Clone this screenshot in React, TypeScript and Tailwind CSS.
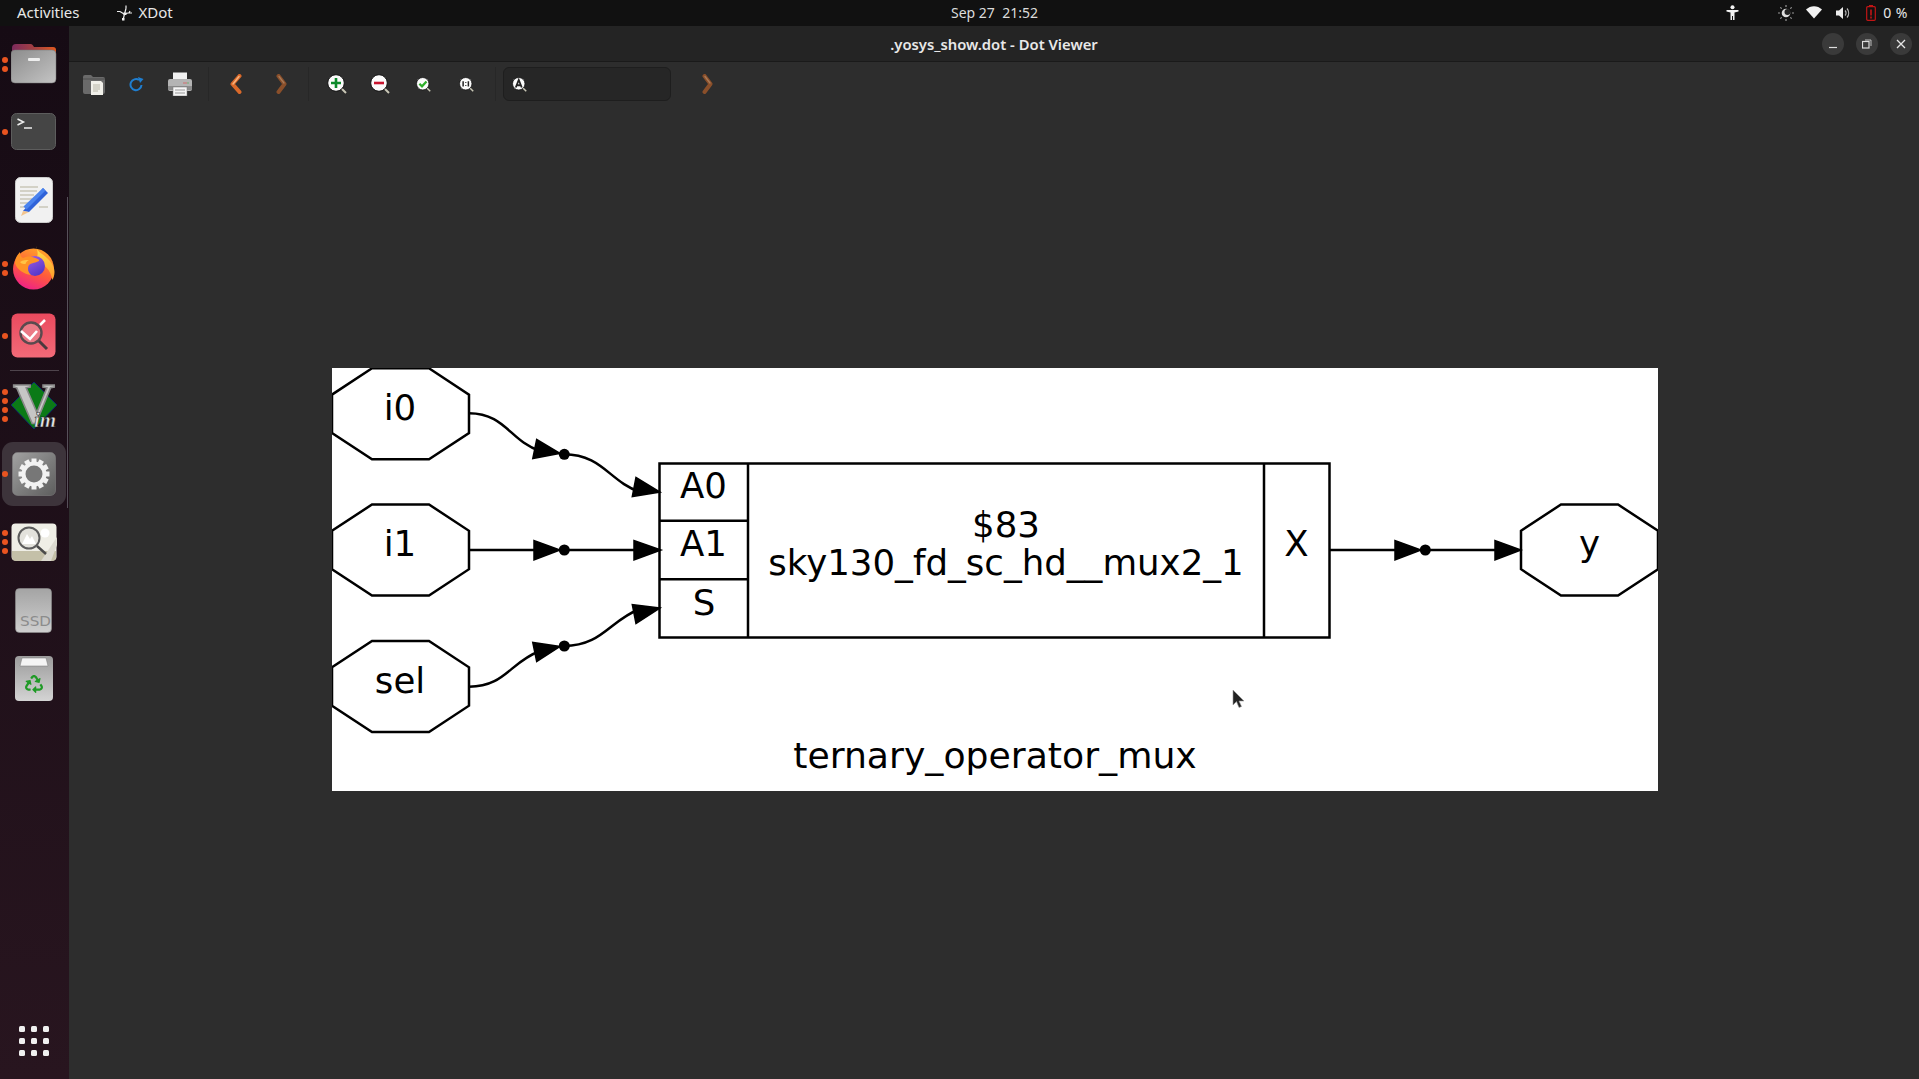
import React from "react";
import { FaRecycle } from "react-icons/fa";

const DJ = "'DejaVu Sans', sans-serif";

function Dots({ n }: { n: number }) {
  return (
    <div className="absolute left-[2px] top-0 bottom-0 flex flex-col justify-center gap-[3px]">
      {Array.from({ length: n }).map((_, i) => (
        <span key={i} className="block w-[6px] h-[6px] rounded-full bg-[#e95420]" />
      ))}
    </div>
  );
}

function DockItem({ n, active, tall, children }: { n: number; active?: boolean; tall?: boolean; children: React.ReactNode }) {
  return (
    <div className={tall ? "relative w-[68px] h-[69px] flex items-center justify-center" : "relative w-[68px] h-[68px] flex items-center justify-center"}>
      {active && <div className="absolute left-[2px] top-[2px] w-[64px] h-[64px] rounded-[11px] bg-[#3d343b]" />}
      <Dots n={n} />
      <div className="relative flex">{children}</div>
    </div>
  );
}

const FolderIcon = () => (
  <svg width="46" height="40" viewBox="0 2 46 40">
    <defs>
      <linearGradient id="ft" x1="0" x2="1" y1="0" y2="0">
        <stop offset="0" stopColor="#7c2a5c" />
        <stop offset="0.55" stopColor="#a8423f" />
        <stop offset="1" stopColor="#e2591f" />
      </linearGradient>
      <linearGradient id="fb" x1="0" x2="1" y1="0" y2="1">
        <stop offset="0" stopColor="#8c8c8c" />
        <stop offset="1" stopColor="#c4c4c4" />
      </linearGradient>
    </defs>
    <path d="M1 6a4 4 0 0 1 4-4h14a3 3 0 0 1 3 1.5l1 1.5h19a3 3 0 0 1 3 3v10H1z" fill="url(#ft)" />
    <rect x="0" y="8" width="45" height="33" rx="4" fill="url(#fb)" stroke="#777" strokeWidth="0.5" />
    <rect x="17" y="16" width="12" height="3" rx="1" fill="#eee" />
  </svg>
);

const TerminalIcon = () => (
  <svg width="46" height="38" viewBox="0 0 46 38">
    <rect x="0.5" y="0.5" width="44" height="36" rx="5" fill="#454545" stroke="#5d5d5d" />
    <path d="M6.5 6l6 3-6 3" fill="none" stroke="#eee" strokeWidth="1.5" />
    <path d="M13 15h8" stroke="#eee" strokeWidth="1.5" />
  </svg>
);

const EditorIcon = () => (
  <svg width="38" height="46" viewBox="0 0 38 46">
    <rect x="0.5" y="0.5" width="37" height="45" rx="5" fill="#f1f1f1" stroke="#ccc" />
    <path d="M5 10h18M5 14h17M5 18h14M5 22h12M5 26h9M5 30h7M24 30h9" stroke="#c9c6b8" strokeWidth="1.6" />
    <path d="M28 11l5 5-19 19-6-1z" fill="#2f62d9" />
    <path d="M28 11l2.5 2.5-19 19-3-3z" fill="#4a83ee" />
    <path d="M8 34l6 1-8 4z" fill="#f3c48d" />
  </svg>
);

const FirefoxIcon = () => (
  <svg width="44" height="44" viewBox="0 0 44 44">
    <defs>
      <linearGradient id="ff" x1="0.7" x2="0.3" y1="0.1" y2="1">
        <stop offset="0" stopColor="#ff9a2b" />
        <stop offset="0.5" stopColor="#ff5a3c" />
        <stop offset="1" stopColor="#ee1f8a" />
      </linearGradient>
      <linearGradient id="fy" x1="0.5" x2="0.6" y1="0" y2="1">
        <stop offset="0" stopColor="#ffe14a" />
        <stop offset="1" stopColor="#ff9a2b" />
      </linearGradient>
      <linearGradient id="fp" x1="0.2" x2="0.8" y1="0" y2="1">
        <stop offset="0" stopColor="#a25ce0" />
        <stop offset="1" stopColor="#4a34c8" />
      </linearGradient>
    </defs>
    <circle cx="21.500" cy="23" r="20.500" fill="url(#ff)" />
    <path d="M24 0c1 6 6 7 11 12 5 5 7.500 9 7.500 14 0 3-1 6-2 8-2-10-8-17-19-19 5-2 5-9 2.500-15z" fill="url(#fy)" />
    <circle cx="23" cy="20" r="10" fill="url(#fp)" />
    <path d="M3 17c0-4 2-8 5-11 0 3 1 5 3 6 2-1 6-2 9-1 3 1 8 2 7 4-4 2-8 2-10 4-2 3-1 7 2 10-7-1-14-5-16-12z" fill="#ff9326" />
    <path d="M8 16c3-2 6-2 9-2-2 1-3 2-3.500 4-2 0-4 0-5.500-2z" fill="#ffc445" />
  </svg>
);

const RedIcon = () => (
  <svg width="46" height="46" viewBox="0 0 46 46">
    <defs>
      <linearGradient id="rd" x1="0" x2="0" y1="0" y2="1">
        <stop offset="0" stopColor="#e94a5e" />
        <stop offset="1" stopColor="#f26a78" />
      </linearGradient>
    </defs>
    <rect x="0.5" y="0.5" width="44" height="44" rx="6" fill="url(#rd)" />
    <circle cx="20" cy="20" r="10.5" fill="#eb7a86" stroke="#5a4a4e" strokeWidth="2.4" />
    <path d="M10 18l9 8 7-8M29 12l5-5" fill="none" stroke="#fff" strokeWidth="2.6" />
    <path d="M28 28l8 8" stroke="#4a3a3e" strokeWidth="3" />
  </svg>
);

const VimIcon = () => (
  <svg className="overflow-visible" width="46" height="48" viewBox="0 0 46 48">
    <path d="M23 0L46 23 23 47 0 23z" fill="#0b7a17" stroke="#0a2a6a" strokeWidth="1" />
    <text x="2" y="41" fontFamily="'Liberation Serif', serif" fontWeight="700" fontSize="58" fill="#c6c6c6" stroke="#8a8a8a" strokeWidth="1.600">V</text>
    <text x="23" y="45" fontFamily="'Liberation Serif', serif" fontStyle="italic" fontWeight="700" fontSize="21" fill="#e4e4e4" stroke="#111" strokeWidth="0.5">im</text>
  </svg>
);

const SettingsIcon = () => {
  const teeth = Array.from({ length: 12 }).map((_, i) => i * 30);
  return (
    <svg width="44" height="44" viewBox="0 0 44 44">
      <defs>
        <linearGradient id="st" x1="0" x2="1" y1="0" y2="1">
          <stop offset="0" stopColor="#a2a2a2" />
          <stop offset="1" stopColor="#5d5d5d" />
        </linearGradient>
      </defs>
      <rect x="0.5" y="0.5" width="43" height="43" rx="5" fill="url(#st)" stroke="#888" strokeWidth="0.5" />
      {teeth.map((a) => (
        <rect key={a} x="19.5" y="6.5" width="5" height="6" fill="#f2f2f2" transform={`rotate(${a} 22 22)`} />
      ))}
      <circle cx="22" cy="22" r="10.5" fill="#777" stroke="#f2f2f2" strokeWidth="4" />
    </svg>
  );
};

const LensIcon = () => (
  <svg width="46" height="38" viewBox="0 0 46 38">
    <rect x="0.5" y="0.5" width="45" height="37" rx="4" fill="#efeee6" />
    <path d="M1 28h44v6a4 4 0 0 1-4 4H5a4 4 0 0 1-4-4z" fill="#c4c0a8" />
    <path d="M30 38L46 14v8L40 38z" fill="#dcdad0" />
    <circle cx="34" cy="10" r="4.5" fill="#fff" />
    <circle cx="18" cy="15" r="10.5" fill="#e3e2dc" stroke="#5c5c5c" strokeWidth="2" />
    <path d="M11 21l5-10 3 5 2-3 4 8z" fill="#fff" />
    <path d="M26 23l9 8" stroke="#4a4a4a" strokeWidth="2.4" />
  </svg>
);

const SsdIcon = () => (
  <svg width="38" height="45" viewBox="0 0 38 45">
    <defs>
      <linearGradient id="sd" x1="0" x2="0" y1="0" y2="1">
        <stop offset="0" stopColor="#a4a4a4" />
        <stop offset="1" stopColor="#cfcfcf" />
      </linearGradient>
    </defs>
    <rect x="0.5" y="0.5" width="36" height="44" rx="4" fill="url(#sd)" stroke="#8f8f8f" strokeWidth="0.6" />
    <text x="5" y="38" fontFamily={DJ} fontSize="14" fill="#8c8c8c" textLength="31" lengthAdjust="spacingAndGlyphs">SSD</text>
  </svg>
);

const TrashIcon = () => (
  <div className="relative w-[38px] h-[45px] rounded-[4px] bg-gradient-to-b from-[#9c9c9c] to-[#d4d4d4] flex items-end justify-center pb-[8px]">
    <svg className="absolute left-[4px] top-[1px]" width="30" height="10" viewBox="0 0 30 10">
      <path d="M3 1h24l2 8H1z" fill="#f4f4f4" stroke="#777" strokeWidth="0.5" />
    </svg>
    <FaRecycle className="text-[#1f9a26] text-[18px]" />
  </div>
);

function Dock() {
  return (
    <div className="relative w-[69px] shrink-0 flex flex-col pt-[4px] bg-gradient-to-b from-[#160b14] to-[#28151f]">
      <div className="absolute right-[1px] top-[171px] h-[311px] w-px bg-[#57505a]" />
      <DockItem n={2}><FolderIcon /></DockItem>
      <DockItem n={1}><TerminalIcon /></DockItem>
      <DockItem n={0}><EditorIcon /></DockItem>
      <DockItem n={2}><FirefoxIcon /></DockItem>
      <DockItem n={1}><RedIcon /></DockItem>
      <div className="h-px mx-[10px] bg-[#4e444c]" />
      <DockItem n={4} tall><VimIcon /></DockItem>
      <DockItem n={1} active><SettingsIcon /></DockItem>
      <DockItem n={3}><LensIcon /></DockItem>
      <DockItem n={0}><SsdIcon /></DockItem>
      <DockItem n={0}><TrashIcon /></DockItem>
      <div className="mt-auto mb-[23px] ml-[19px] grid grid-cols-3 gap-x-[6px] gap-y-[6px] w-[30px]">
        {Array.from({ length: 9 }).map((_, i) => (
          <span key={i} className="block w-[6px] h-[6px] rounded-[1.5px] bg-[#f0f0f0]" />
        ))}
      </div>
    </div>
  );
}

function TopBar() {
  return (
    <div className="relative h-[26px] shrink-0 bg-[#111111] flex items-center pb-[1px] text-[15px] text-[#e8e8e8]" style={{ fontFamily: "'Noto Sans', sans-serif" }}>
      <span className="ml-[17px]">Activities</span>
      <svg className="ml-[37px]" width="16" height="16" viewBox="0 0 16 16" fill="none" stroke="#eee" strokeWidth="1.2">
        <path d="M0 6.5h3M3 6.5l4 2.5M9 0.5v3M9 3.5L7.5 9M7.5 9L6 15M7 9l4-1h4M12 8l1-2" />
        <rect x="5" y="13" width="2.5" height="2.5" fill="#eee" stroke="none" />
        <rect x="6.5" y="7.5" width="3" height="2.5" fill="#eee" stroke="none" />
      </svg>
      <span className="ml-[6px]">XDot</span>
      <span className="absolute left-[951px] top-[2px] text-[14px] text-[#dcdcdc] whitespace-pre">Sep 27  21:52</span>
      <div className="ml-auto flex items-center">
        <svg width="13" height="16" viewBox="0 0 13 16" fill="#f2f2f2">
          <circle cx="6.5" cy="2.2" r="2" />
          <path d="M0.5 5h12v1.4l-4 1V15H7V11H6v4H4.500V7.400l-4-1z" />
        </svg>
        <svg className="ml-[39px]" width="16" height="16" viewBox="0 0 16 16" fill="none">
          <circle cx="8" cy="8" r="4.300" fill="#ddd" />
          <circle cx="9.500" cy="7" r="3" fill="#222" />
          <path d="M8 0v2M8 14v2M0 8h2M14 8h2M2.300 2.300l1.400 1.400M12.300 12.300l1.400 1.400M2.300 13.700l1.400-1.400M12.300 3.700l1.400-1.400" stroke="#999" strokeWidth="1.2" />
        </svg>
        <svg className="ml-[12px]" width="16" height="13" viewBox="0 0 16 13">
          <path d="M0 3.500C4.500-1 11.500-1 16 3.500L8 12.500z" fill="#f2f2f2" />
        </svg>
        <svg className="ml-[14px]" width="15" height="14" viewBox="0 0 15 14" fill="none">
          <path d="M0 4.500h3L7 1v12L3 9.500H0z" fill="#ececec" />
          <path d="M9 4.500a3.500 3.500 0 0 1 0 5M11 2.500a7 7 0 0 1 0 9" stroke="#bbb" strokeWidth="1.200" />
        </svg>
        <svg className="ml-[15px]" width="10" height="16" viewBox="0 0 10 16" fill="none">
          <rect x="0.700" y="1.700" width="8.600" height="13.600" rx="1" stroke="#c01515" strokeWidth="1.200" />
          <rect x="3" y="0" width="4" height="1.500" fill="#c01515" />
          <path d="M5 4.500v6M5 11.500v2" stroke="#c01515" strokeWidth="1.600" />
        </svg>
        <span className="ml-[7px] mr-[11px] text-[14px] tracking-[0.5px]">0 %</span>
      </div>
    </div>
  );
}

function WinBtn({ children }: { children: React.ReactNode }) {
  return <div className="w-[22px] h-[22px] rounded-full bg-[#3a3a3a] flex items-center justify-center">{children}</div>;
}

function TitleBar() {
  return (
    <div className="relative h-[36px] shrink-0 bg-[#242424] border-b border-[#1a1a1a] flex items-center justify-center pt-[1px]" style={{ fontFamily: "'Noto Sans', sans-serif" }}>
      <span className="text-[14.800px] font-semibold text-[#e8e8e8]">.yosys_show.dot - Dot Viewer</span>
      <div className="absolute right-[7px] top-[7px] flex gap-[12px]">
        <WinBtn>
          <svg width="10" height="10" viewBox="0 0 10 10"><path d="M1 8.500h8" stroke="#ddd" strokeWidth="1.200" /></svg>
        </WinBtn>
        <WinBtn>
          <svg width="10" height="10" viewBox="0 0 10 10" fill="none" stroke="#ddd"><rect x="0.500" y="2.500" width="6.500" height="6.500" strokeWidth="1.200" /><path d="M3 1h6v6" strokeWidth="0.800" /></svg>
        </WinBtn>
        <WinBtn>
          <svg width="10" height="10" viewBox="0 0 10 10"><path d="M1 1l8 8M9 1l-8 8" stroke="#e6e6e6" strokeWidth="1.300" /></svg>
        </WinBtn>
      </div>
    </div>
  );
}

function Sep({ ml }: { ml: string }) {
  return <div className={`${ml} w-px h-[34px] bg-[#272727]`} />;
}

function Magnifier({ size, children }: { size: number; children?: React.ReactNode }) {
  return (
    <svg width={size} height={size} viewBox="0 0 20 20">
      <path d="M13 13l6 6" stroke="#c9c7b6" strokeWidth="2" />
      <circle cx="9" cy="9" r="8.300" fill="#fbfbfb" stroke="#111" strokeWidth="1" />
      {children}
    </svg>
  );
}

const ArrowL = ({ c1, c2 }: { c1: string; c2: string }) => (
  <svg width="12" height="20" viewBox="0 0 12 20">
    <path d="M9.500 2L2.500 10l7 8" fill="none" stroke={c2} strokeWidth="4" strokeLinecap="round" strokeLinejoin="round" />
    <path d="M9 2.500L3 10" fill="none" stroke={c1} strokeWidth="1.500" strokeLinecap="round" />
  </svg>
);

const ArrowR = () => (
  <svg width="11" height="20" viewBox="0 0 11 20">
    <path d="M2.500 2l6 8-6 8" fill="none" stroke="#8a4f2a" strokeWidth="4" strokeLinecap="round" strokeLinejoin="round" />
    <path d="M3 2.500L8 9" fill="none" stroke="#a97a58" strokeWidth="1.300" strokeLinecap="round" />
  </svg>
);

function Toolbar() {
  return (
    <div className="h-[44px] shrink-0 flex items-center bg-[#2d2d2d]">
      <svg className="ml-[14px]" width="22" height="21" viewBox="0 0 22 21">
        <path d="M0 3a2 2 0 0 1 2-2h6l2 2h10a2 2 0 0 1 2 2v13a2 2 0 0 1-2 2H2a2 2 0 0 1-2-2z" fill="#6a6a6a" />
        <path d="M0 5h22" stroke="#4e4e4e" strokeWidth="1" />
        <path d="M8 7h10l2 2v12H8z" fill="#f1f0ea" />
        <path d="M10 11h7M10 13h7M10 15h7M10 17h5" stroke="#b8b6a8" strokeWidth="1" />
      </svg>
      <svg className="ml-[24px]" width="15" height="15" viewBox="0 0 15 15" fill="none">
        <path d="M12.500 8a5.500 5.500 0 1 1-2.500-5" stroke="#1f7ed0" strokeWidth="2" />
        <path d="M9 0l5.500 2-3.500 4z" fill="#1f7ed0" />
      </svg>
      <svg className="ml-[24px]" width="24" height="24" viewBox="0 0 24 24">
        <rect x="5" y="0.500" width="14" height="8" fill="#f2f2f2" />
        <rect x="0" y="7" width="24" height="12" rx="2" fill="#b4b4b4" />
        <rect x="0" y="14" width="24" height="4" fill="#8c8c8c" />
        <circle cx="16" cy="11" r="0.700" fill="#d55" /><circle cx="18" cy="11" r="0.700" fill="#d55" /><circle cx="20" cy="11" r="0.700" fill="#5a5" />
        <rect x="5" y="15" width="14" height="9" fill="#f5f5f5" stroke="#777" strokeWidth="0.500" />
        <path d="M7 18h10M7 21h10" stroke="#999" />
      </svg>
      <Sep ml="ml-[16px]" />
      <div className="ml-[21px] flex"><ArrowL c1="#f6b27c" c2="#d9692a" /></div>
      <div className="ml-[34px] flex"><ArrowR /></div>
      <Sep ml="ml-[21px]" />
      <div className="ml-[18px] flex">
        <Magnifier size={20}><path d="M4 9h10M9 4v10" stroke="#0d8a2b" strokeWidth="2.600" /></Magnifier>
      </div>
      <div className="ml-[23px] flex">
        <Magnifier size={20}><path d="M4 9h10" stroke="#c8152f" strokeWidth="2.600" /></Magnifier>
      </div>
      <div className="ml-[26px] flex">
        <Magnifier size={15}><path d="M4.500 9l3.500 3.500 6-6.500" fill="none" stroke="#2fae2a" strokeWidth="3" /></Magnifier>
      </div>
      <div className="ml-[28px] flex">
        <Magnifier size={15}><path d="M5.500 5.500v7M12.500 5.500v7M9 6.500v1M9 10.500v1" stroke="#222" strokeWidth="2" /></Magnifier>
      </div>
      <Sep ml="ml-[21px]" />
      <div className="ml-[7px] w-[168px] h-[34px] rounded-[6px] bg-[#262626] border border-[#1e1e1e] flex items-center pl-[8px]">
        <Magnifier size={15}><path d="M5 14L9 4l4 10M6.500 11h5" fill="none" stroke="#222" strokeWidth="2.400" /></Magnifier>
      </div>
      <div className="ml-[31px] flex"><ArrowR /></div>
    </div>
  );
}

const octagon = (y0: number) => {
  const ys = [y0 + 26.3, y0, y0, y0 + 26.3, y0 + 64.7, y0 + 91, y0 + 91, y0 + 64.7];
  const xs = [332, 372, 429, 469, 469, 429, 372, 332];
  return xs.map((x, i) => `${x},${ys[i]}`).join(" ");
};

function Arrow({ p }: { p: string }) {
  return <polygon points={p} fill="#000" stroke="#000" strokeWidth="1.500" />;
}

function Graph() {
  const text = { fontFamily: DJ, fontSize: 35.6, fill: "#000", textAnchor: "middle" as const };
  return (
    <svg className="block" width="1326" height="423" viewBox="332 368 1326 423">
      <g fill="none" stroke="#000" strokeWidth="2.500">
        <polygon points={octagon(368.3)} />
        <polygon points={octagon(504.5)} />
        <polygon points={octagon(641)} />
        <polygon points="1521,530.800 1561,504.500 1618,504.500 1658,530.800 1658,569.200 1618,595.500 1561,595.500 1521,569.200" />
        <rect x="659.500" y="463.500" width="670" height="174" />
        <path d="M659.500 520.700H748M659.500 579.300H748M748 463.500V637.500M1264 463.500V637.500" />
        <path d="M469 413.300C505 413.300 510 441 540 451" />
        <path d="M564 454.300C602 454.300 610 482 640 492" />
        <path d="M469 550H535M564 550H635" />
        <path d="M469 686.700C505 686.700 510 662 540 651" />
        <path d="M564 646C602 646 610 620 640 609" />
        <path d="M1330 550H1396M1425 550H1496" />
      </g>
      <Arrow p="536.700,439.500 532.800,458.500 560,453.300" />
      <Arrow p="636,477.500 632.300,496.500 660,492" />
      <Arrow p="534,540.500 534,560 560,550" />
      <Arrow p="634,540.500 634,560 661,550" />
      <Arrow p="532.800,642.500 536.700,661.500 560,646.500" />
      <Arrow p="632.300,604.500 636,623.500 660,608" />
      <Arrow p="1395,540.500 1395,560 1421,550" />
      <Arrow p="1495,540.500 1495,560 1521,550" />
      <circle cx="564.300" cy="454.300" r="5.500" />
      <circle cx="564.300" cy="550" r="5.500" />
      <circle cx="564.300" cy="646" r="5.500" />
      <circle cx="1425.300" cy="550" r="5.500" />
      <text {...text} x="400" y="420">i0</text>
      <text {...text} x="400" y="555.500">i1</text>
      <text {...text} x="400" y="692.500">sel</text>
      <text {...text} x="703.500" y="497.500">A0</text>
      <text {...text} x="703.500" y="555.500">A1</text>
      <text {...text} x="704" y="615">S</text>
      <text {...text} x="1006" y="537">$83</text>
      <text {...text} x="1006" y="575">sky130_fd_sc_hd__mux2_1</text>
      <text {...text} x="1296.500" y="556">X</text>
      <text {...text} x="1589.500" y="556">y</text>
      <text {...text} x="995" y="768" fontSize="36.200">ternary_operator_mux</text>
      <path d="M1233 690v15l3.500-3.500 2.500 6 2.500-1-2.500-5.500h5z" fill="#222" stroke="#999" strokeWidth="0.600" />
    </svg>
  );
}

export default function App() {
  return (
    <div className="w-[1919px] h-[1079px] overflow-hidden flex flex-col bg-[#2d2d2d]">
      <TopBar />
      <div className="flex-1 flex min-h-0">
        <Dock />
        <div className="flex-1 flex flex-col min-w-0">
          <TitleBar />
          <Toolbar />
          <div className="flex-1 pt-[262px] pl-[263px]">
            <div className="w-[1326px] h-[423px] bg-white">
              <Graph />
            </div>
          </div>
        </div>
      </div>
    </div>
  );
}
